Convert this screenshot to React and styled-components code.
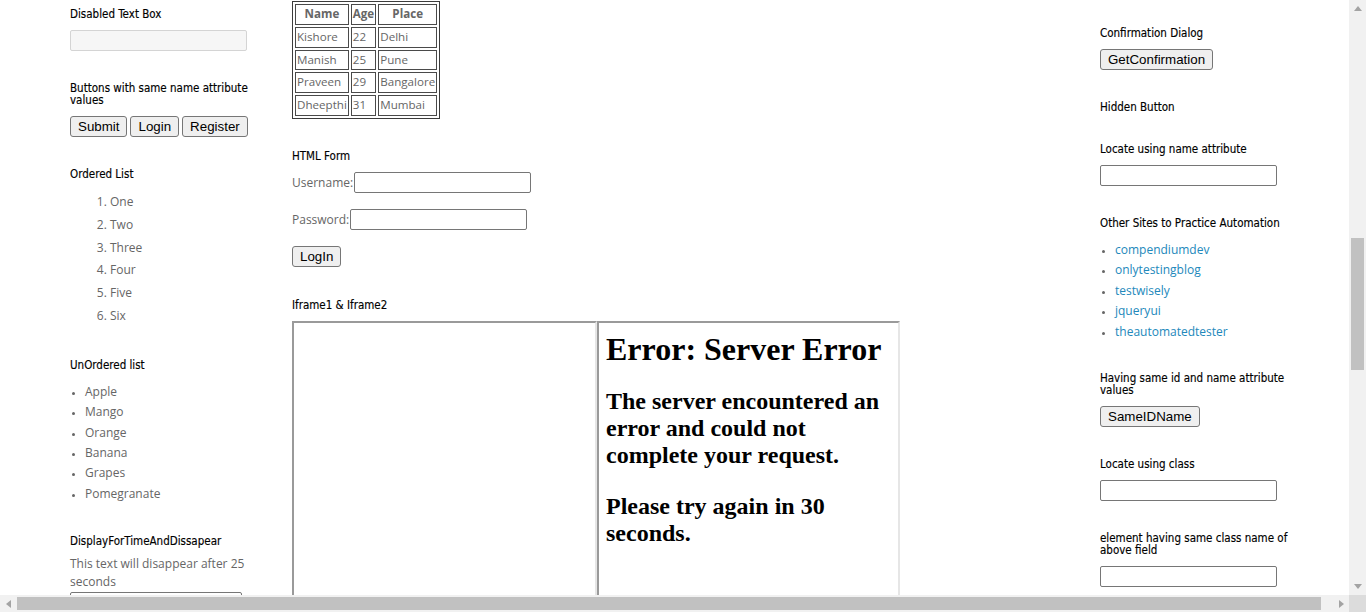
import React from 'react';
import styled, { createGlobalStyle } from 'styled-components';

const GlobalStyle = createGlobalStyle`
  html, body {
    margin: 0;
    padding: 0;
    background: #fff;
  }
  body {
    font: 12px 'Open Sans', 'Liberation Sans', sans-serif;
    color: #666;
    overflow: hidden;
  }
`;

const Screen = styled.div`
  display: grid;
  grid-template-columns: 1349px 17px;
  grid-template-rows: 595px 17px;
  width: 1366px;
  height: 612px;
  overflow: hidden;
`;

const Viewport = styled.div`
  overflow: hidden;
  background: #fff;
`;

const Page = styled.div`
  display: flex;
  align-items: flex-start;
  padding-left: 70px;
`;

const Column = styled.div`
  flex: none;
  width: ${(p) => p.$width}px;
  margin-right: ${(p) => p.$after || 0}px;
  padding-top: ${(p) => p.$top}px;
  display: flex;
  flex-direction: column;
  align-items: flex-start;
  gap: 30px;
`;

const Widget = styled.section`
  display: flex;
  flex-direction: column;
  align-items: flex-start;
  gap: 11px;
`;

const Title = styled.h2`
  margin: 0;
  font: normal 11.5px/12px 'DejaVu Sans Condensed', 'Liberation Sans', sans-serif;
  color: #000;
  -webkit-text-stroke: 0.15px #000;
`;

const Controls = styled.div`
  display: flex;
  gap: 3px;
  margin: -1px 0 1px;
`;

const Input = styled.input`
  box-sizing: border-box;
  width: ${(p) => p.$width || 177}px;
  height: 21px;
  margin: 0;
  padding: 1px 2px;
  border: 1px solid ${(p) => (p.disabled ? '#d4d4d4' : '#767676')};
  border-radius: 2px;
  background: ${(p) => (p.disabled ? '#f6f6f6' : '#fff')};
  font: 13.33px 'Liberation Sans', sans-serif;
`;

const Button = styled.button`
  box-sizing: border-box;
  height: 21px;
  margin: 0;
  padding: 0 7px;
  border: 1px solid #767676;
  border-radius: 3px;
  background: #efefef;
  color: #000;
  font: 13.33px/19px 'Liberation Sans', sans-serif;
`;

const List = styled.ul`
  margin: 0 0 ${(p) => p.$trail || 0}px;
  padding: 0 0 0 ${(p) => p.$indent}px;
  line-height: ${(p) => p.$line}px;
  list-style: ${(p) => (p.as === 'ol' ? 'decimal' : 'disc')};
  li {
    padding: 3px 0;
  }
  li::marker {
    font-size: ${(p) => (p.as === 'ol' ? 12 : 9)}px;
  }
`;

const Link = styled.a`
  color: #2288bb;
  text-decoration: none;
`;

const Timed = styled.div`
  display: flex;
  flex-direction: column;
  align-items: flex-start;
  gap: 1px;
  margin-top: -3px;
`;

const Note = styled.p`
  margin: 0;
  line-height: 18px;
`;

const DataTable = styled.table`
  margin-bottom: 1px;
  border: 1px solid #3c3c3c;
  border-spacing: 2px;
  font-size: 11.6px;
  line-height: 16.8px;
  th, td {
    border: 1px solid #4a4a4a;
    padding: 1px;
    text-align: left;
    white-space: nowrap;
  }
  th {
    text-align: center;
    font-weight: bold;
  }
`;

const FormStack = styled.form`
  display: flex;
  flex-direction: column;
  align-items: flex-start;
  gap: 16px;
  margin: -1px 0 2px;
`;

const Field = styled.label`
  display: flex;
  align-items: center;
  gap: 1px;
`;

const Frames = styled.div`
  display: flex;
  margin-top: -1px;
`;

const Frame = styled.div`
  box-sizing: border-box;
  width: ${(p) => p.$width}px;
  height: 300px;
  border: 2px solid;
  border-color: #9a9a9a #e6e6e6 #e6e6e6 #9a9a9a;
  padding: 8px 8px 8px 7px;
  background: #fff;
  color: #000;
  font-family: 'Liberation Serif', serif;
`;

const ErrorHead = styled.h1`
  margin: 0 0 20px;
  font-size: 32px;
  line-height: 37px;
  font-weight: bold;
`;

const ErrorText = styled.h2`
  margin: 0 0 24px;
  font-size: 24px;
  line-height: 27px;
  font-weight: bold;
`;

const VTrack = styled.div`
  background: #f1f1f1;
  display: flex;
  flex-direction: column;
  align-items: center;
`;

const HTrack = styled.div`
  background: #f1f1f1;
  display: flex;
  align-items: center;
`;

const Corner = styled.div`
  background: #dcdcdc;
`;

const Arrow = styled.div`
  flex: none;
  width: 17px;
  height: 17px;
  display: flex;
  align-items: center;
  justify-content: center;
`;

const VThumb = styled.div`
  width: 13px;
  height: ${(p) => p.$size}px;
  margin-top: ${(p) => p.$offset}px;
  background: #c1c1c1;
`;

const HThumb = styled.div`
  height: 13px;
  width: ${(p) => p.$size}px;
  background: #c1c1c1;
`;

const Spacer = styled.div`
  flex: 1;
`;

const Tri = ({ dir }) => {
  const pts = {
    up: '4,1 8,6 0,6',
    down: '0,1 8,1 4,6',
    left: '6,0 6,8 1,4',
    right: '2,0 7,4 2,8',
  }[dir];
  return (
    <svg width="8" height="8" viewBox="0 0 8 8">
      <polygon points={pts} fill="#a3a3a3" />
    </svg>
  );
};

const people = [
  ['Kishore', 22, 'Delhi'],
  ['Manish', 25, 'Pune'],
  ['Praveen', 29, 'Bangalore'],
  ['Dheepthi', 31, 'Mumbai'],
];

const sites = ['compendiumdev', 'onlytestingblog', 'testwisely', 'jqueryui', 'theautomatedtester'];

export default function App() {
  return (
    <>
      <GlobalStyle />
      <Screen>
        <Viewport>
          <Page>
            <Column $width={192} $after={30} $top={8}>
              <Widget>
                <Title>Disabled Text Box</Title>
                <Controls>
                  <Input disabled />
                </Controls>
              </Widget>
              <Widget>
                <Title>
                  Buttons with same name attribute
                  <br />
                  values
                </Title>
                <Controls>
                  <Button>Submit</Button>
                  <Button>Login</Button>
                  <Button>Register</Button>
                </Controls>
              </Widget>
              <Widget>
                <Title>Ordered List</Title>
                <List as="ol" $indent={40} $line={16.8} $trail={1}>
                  {['One', 'Two', 'Three', 'Four', 'Five', 'Six'].map((n) => (
                    <li key={n}>{n}</li>
                  ))}
                </List>
              </Widget>
              <Widget>
                <Title>UnOrdered list</Title>
                <List $indent={15} $line={14.4} $trail={1}>
                  {['Apple', 'Mango', 'Orange', 'Banana', 'Grapes', 'Pomegranate'].map((n) => (
                    <li key={n}>{n}</li>
                  ))}
                </List>
              </Widget>
              <Widget>
                <Title>DisplayForTimeAndDissapear</Title>
                <Timed>
                  <Note>This text will disappear after 25 seconds</Note>
                  <Input $width={172} />
                </Timed>
              </Widget>
            </Column>

            <Column $width={608} $after={200} $top={1}>
              <DataTable>
                <thead>
                  <tr>
                    <th style={{ width: 48 }}>Name</th>
                    <th>Age</th>
                    <th style={{ width: 53 }}>Place</th>
                  </tr>
                </thead>
                <tbody>
                  {people.map(([name, age, place]) => (
                    <tr key={name}>
                      <td>{name}</td>
                      <td>{age}</td>
                      <td>{place}</td>
                    </tr>
                  ))}
                </tbody>
              </DataTable>
              <Widget>
                <Title>HTML Form</Title>
                <FormStack>
                  <Field>
                    Username: <Input />
                  </Field>
                  <Field>
                    Password: <Input type="password" />
                  </Field>
                  <Button type="button">LogIn</Button>
                </FormStack>
              </Widget>
              <Widget>
                <Title>Iframe1 &amp; Iframe2</Title>
                <Frames>
                  <Frame $width={305} />
                  <Frame $width={303}>
                    <ErrorHead>Error: Server Error</ErrorHead>
                    <ErrorText>The server encountered an error and could not complete your request.</ErrorText>
                    <ErrorText>Please try again in 30 seconds.</ErrorText>
                  </Frame>
                </Frames>
              </Widget>
            </Column>

            <Column $width={190} $top={27}>
              <Widget>
                <Title>Confirmation Dialog</Title>
                <Controls>
                  <Button>GetConfirmation</Button>
                </Controls>
              </Widget>
              <Widget>
                <Title>Hidden Button</Title>
              </Widget>
              <Widget>
                <Title>Locate using name attribute</Title>
                <Controls>
                  <Input />
                </Controls>
              </Widget>
              <Widget>
                <Title>Other Sites to Practice Automation</Title>
                <List $indent={15} $line={14.4}>
                  {sites.map((s) => (
                    <li key={s}>
                      <Link href="#">{s}</Link>
                    </li>
                  ))}
                </List>
              </Widget>
              <Widget>
                <Title>
                  Having same id and name attribute
                  <br />
                  values
                </Title>
                <Controls>
                  <Button>SameIDName</Button>
                </Controls>
              </Widget>
              <Widget>
                <Title>Locate using class</Title>
                <Controls>
                  <Input />
                </Controls>
              </Widget>
              <Widget>
                <Title>
                  element having same class name of
                  <br />
                  above field
                </Title>
                <Controls>
                  <Input />
                </Controls>
              </Widget>
            </Column>
          </Page>
        </Viewport>

        <VTrack>
          <Arrow>
            <Tri dir="up" />
          </Arrow>
          <VThumb $size={132} $offset={221} />
          <Spacer />
          <Arrow>
            <Tri dir="down" />
          </Arrow>
        </VTrack>

        <HTrack>
          <Arrow>
            <Tri dir="left" />
          </Arrow>
          <HThumb $size={1304} />
          <Spacer />
          <Arrow>
            <Tri dir="right" />
          </Arrow>
        </HTrack>
        <Corner />
      </Screen>
    </>
  );
}
